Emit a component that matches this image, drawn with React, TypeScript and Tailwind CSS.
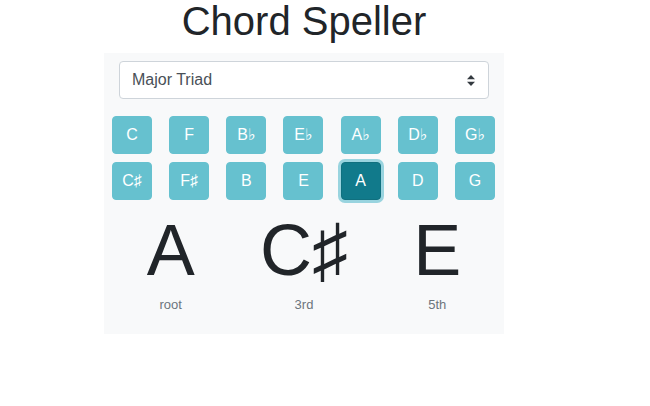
import React, { useState } from 'react';

const ROW_ONE = ['C', 'F', 'B♭', 'E♭', 'A♭', 'D♭', 'G♭'];
const ROW_TWO = ['C♯', 'F♯', 'B', 'E', 'A', 'D', 'G'];

const font = { fontFamily: '"Liberation Sans", "DejaVu Sans", Arial, sans-serif' };

function NoteButton({ note, active, onClick }: { note: string; active: boolean; onClick: () => void }) {
  return (
    <button
      type="button"
      onClick={onClick}
      className={
        active
          ? 'w-[40px] h-[38px] rounded text-white text-base leading-normal bg-[#117a8b] border border-[#10707f] shadow-[0_0_0_3px_rgba(58,176,195,0.5)]'
          : 'w-[40px] h-[38px] rounded text-white text-base leading-normal bg-[#66c1cf] border border-[#66c1cf]'
      }
    >
      {note}
    </button>
  );
}

export default function App() {
  const [root, setRoot] = useState('A');

  return (
    <div className="w-[650px] h-[406px] bg-white text-[#212529]" style={font}>
      <div className="w-[400px] ml-[104px]">
        <h1 className="text-[40px] leading-[42px] mb-[11px] text-center font-normal">Chord Speller</h1>
        <div className="bg-[#f8f9fa] pt-[8px] pb-[19px]">
          <div className="relative mx-[15px]">
            <select
              className="w-full h-[38px] appearance-none bg-white border border-[#ced4da] rounded pl-[12px] pr-8 text-base text-[#495057] outline-none"
              defaultValue="major"
            >
              <option value="major">Major Triad</option>
              <option value="minor">Minor Triad</option>
              <option value="dim">Diminished Triad</option>
              <option value="aug">Augmented Triad</option>
            </select>
            <svg
              className="absolute right-[14px] top-[14px] pointer-events-none"
              width="8"
              height="11"
              viewBox="0 0 8 11"
            >
              <path d="M4 0 L8 4.2 L0 4.2 Z" fill="#343a40" />
              <path d="M0 6.8 L8 6.8 L4 11 Z" fill="#343a40" />
            </svg>
          </div>

          <div className="mt-[17px] px-[8px] pr-[9px] flex flex-col gap-[8px]">
            {[ROW_ONE, ROW_TWO].map((row, i) => (
              <div key={i} className="flex justify-between">
                {row.map((n) => (
                  <NoteButton key={n} note={n} active={n === root} onClick={() => setRoot(n)} />
                ))}
              </div>
            ))}
          </div>

          <div className="grid grid-cols-3 mt-[7px] text-center">
            {[
              ['A', 'root'],
              ['C♯', '3rd'],
              ['E', '5th'],
            ].map(([note, label]) => (
              <div key={label}>
                <div className="text-[72px] leading-[1.2] font-normal">{note}</div>
                <div className="text-[13px] leading-normal text-[#6c757d] mt-[2px]">{label}</div>
              </div>
            ))}
          </div>
        </div>
      </div>
    </div>
  );
}
